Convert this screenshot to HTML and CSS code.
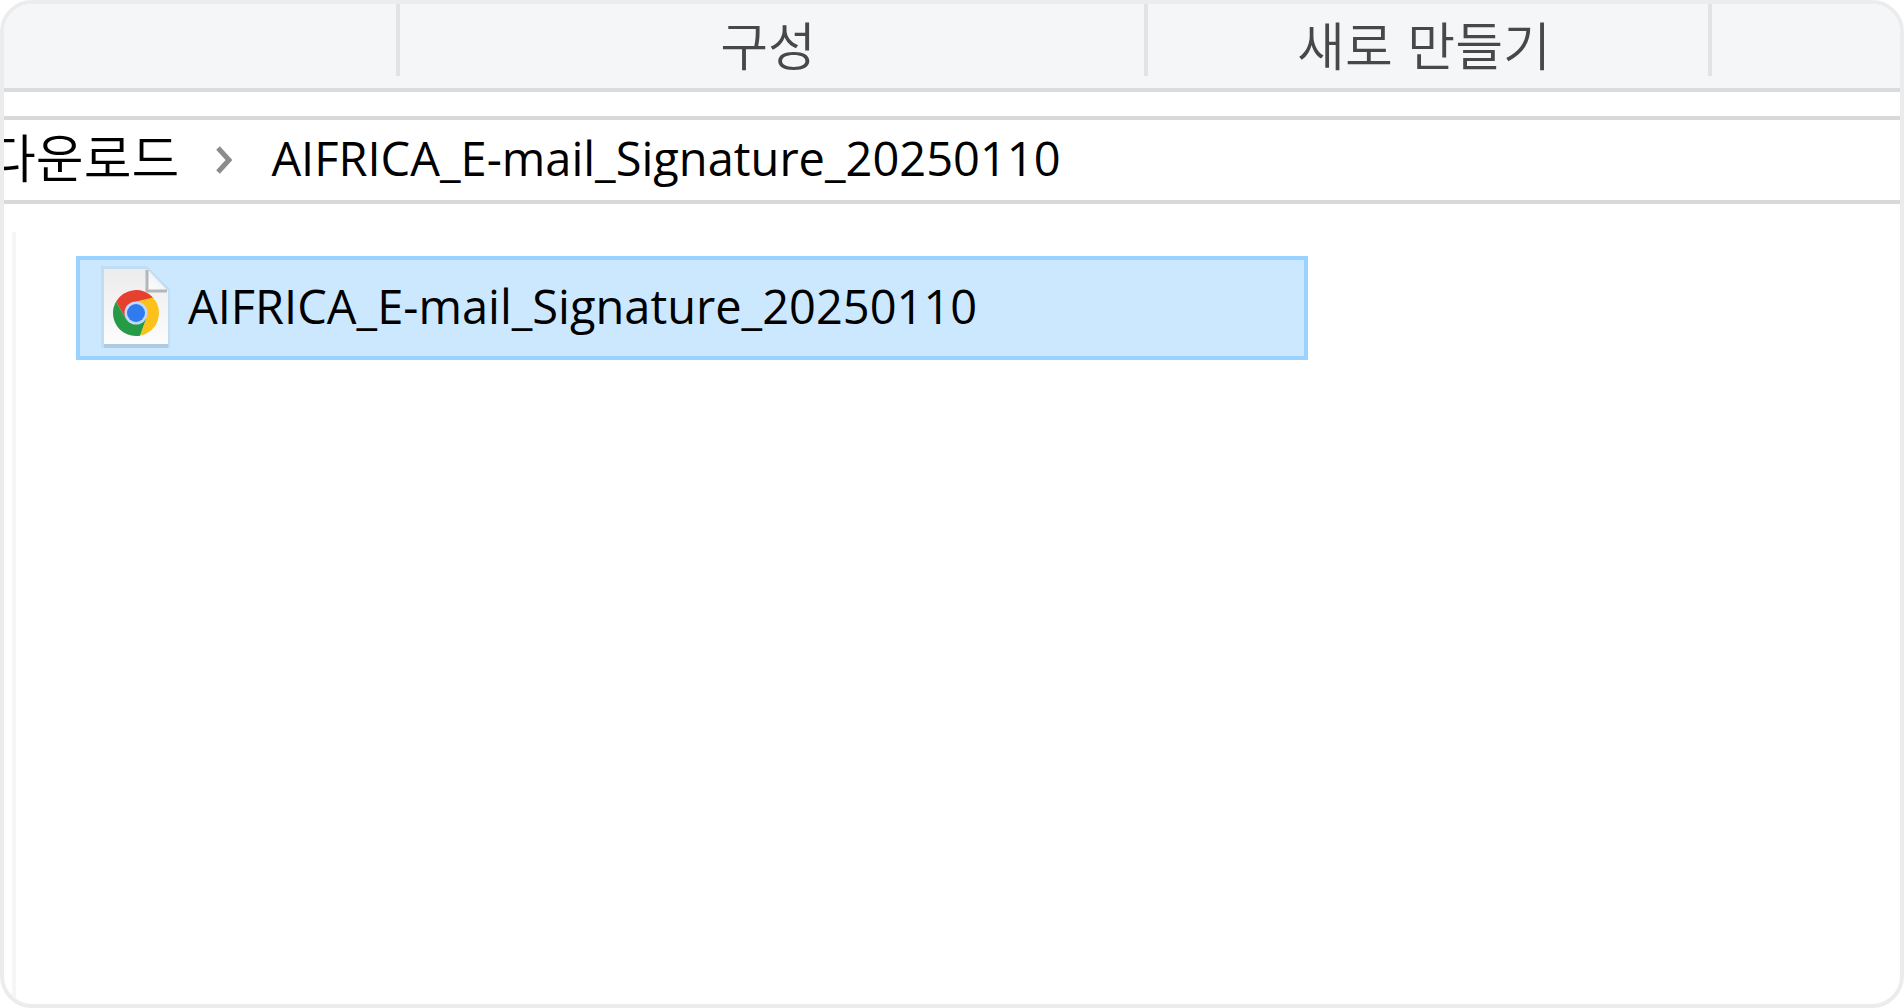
FILE: index.html
```html
<!DOCTYPE html>
<html lang="ko">
<head>
<meta charset="utf-8">
<title>AIFRICA_E-mail_Signature_20250110</title>
<link rel="stylesheet" href="styles.css">
</head>
<body>
<main class="window">
  <header class="ribbon">
    <div class="group"></div>
    <div class="group">구성</div>
    <div class="group">새로 만들기</div>
    <div class="group"></div>
  </header>
  <nav class="address">
    <a class="crumb" href="#">다운로드</a>
    <svg class="chevron" viewBox="0 0 20 28" aria-hidden="true"><path d="M3 2 14 14 3 26"/></svg>
    <a class="crumb" href="#">AIFRICA_E-mail_Signature_20250110</a>
  </nav>
  <section class="content">
    <button class="file" type="button">
      <svg class="file-icon" viewBox="0 0 72 84" aria-hidden="true">
        <defs>
          <linearGradient id="paper" x1="0" y1="0" x2="0" y2="1"><stop offset="0" stop-color="#ececec"/><stop offset="1" stop-color="#fcfcfc"/></linearGradient>
          <linearGradient id="fold" x1="0" y1="1" x2="1" y2="0"><stop offset="0" stop-color="#fff"/><stop offset="1" stop-color="#e4e8ec"/></linearGradient>
        </defs>
        <path fill="#c1ddf4" d="M1 0h46l23 23v59H1z"/>
        <path fill="#aecbe1" d="M4 78h64v4H4z"/>
        <path fill="url(#paper)" d="M4 3h42l22 22v53H4z"/>
        <path fill="url(#fold)" d="M47 3v22h21z"/>
        <path fill="none" stroke="#b4b6b8" stroke-width="3" d="M47 4v21h20"/>
        <g transform="translate(36 47)">
          <path fill="#e8402f" d="M-19.9-11.5A23 23 0 0 1 17-15.5L10-8H0L-10 6z"/>
          <path fill="#fcc21b" d="M17-15.5A23 23 0 0 1 4 22.7L10 6 0-11.5z"/>
          <path fill="#259b47" d="M4 22.7A23 23 0 0 1-19.9-11.5L-10 6 10 6z"/>
          <circle r="11.5" fill="#c2d9fa"/>
          <circle r="9" fill="#2f7bef"/>
        </g>
      </svg>
      <span class="file-name">AIFRICA_E-mail_Signature_20250110</span>
    </button>
  </section>
</main>
</body>
</html>
```
FILE: styles.css
```css
* {
  box-sizing: border-box;
}

body {
  margin: 0;
  background: #fff;
  color: #000;
  font-family: "Open Sans", "Noto Sans CJK KR", sans-serif;
  font-size: 47px;
  line-height: 64px;
}

.window {
  display: flex;
  flex-direction: column;
  min-height: 100vh;
  overflow: hidden;
  background: #fff;
  border: 4px solid #ececec;
  border-radius: 32px;
}

.ribbon {
  display: grid;
  grid-template-columns: 396fr 748fr 564fr 188fr;
  padding-bottom: 12px;
  background: #f4f6f8;
  border-bottom: 4px solid #dadbdc;
  color: #484848;
  font-family: "Noto Sans CJK KR", sans-serif;
  font-size: 52px;
  font-weight: 350;
}

.group {
  height: 72px;
  padding: 8px 8px 0 0;
  border-right: 4px solid #e2e3e4;
  text-align: center;
}

.group:last-child {
  border-right: 0;
}

.address {
  display: flex;
  align-items: center;
  height: 88px;
  margin-top: 24px;
  border: solid #d9d9d9;
  border-width: 4px 0;
  white-space: nowrap;
}

.crumb {
  padding-bottom: 4px;
  color: inherit;
  text-decoration: none;
}

.crumb:first-child {
  margin-left: -16px;
  padding-bottom: 8px;
  font-family: "Noto Sans CJK KR", sans-serif;
  font-size: 52px;
  font-weight: 350;
}

.chevron {
  width: 20px;
  height: 28px;
  margin: 0 36px;
  fill: none;
  stroke: #8c8c8c;
  stroke-width: 5px;
}

.content {
  flex: 1;
  margin: 28px 0 0 8px;
  padding: 24px 60px;
  border-left: 4px solid #f6f6f6;
}

.file {
  display: flex;
  align-items: center;
  gap: 16px;
  width: 100%;
  max-width: 1232px;
  height: 104px;
  padding: 0 20px;
  background: #cce8ff;
  border: 4px solid #99d1ff;
  color: inherit;
  font: inherit;
  text-align: left;
  white-space: nowrap;
}

.file-icon {
  width: 72px;
  height: 84px;
}

.file-name {
  padding-bottom: 4px;
}
```
